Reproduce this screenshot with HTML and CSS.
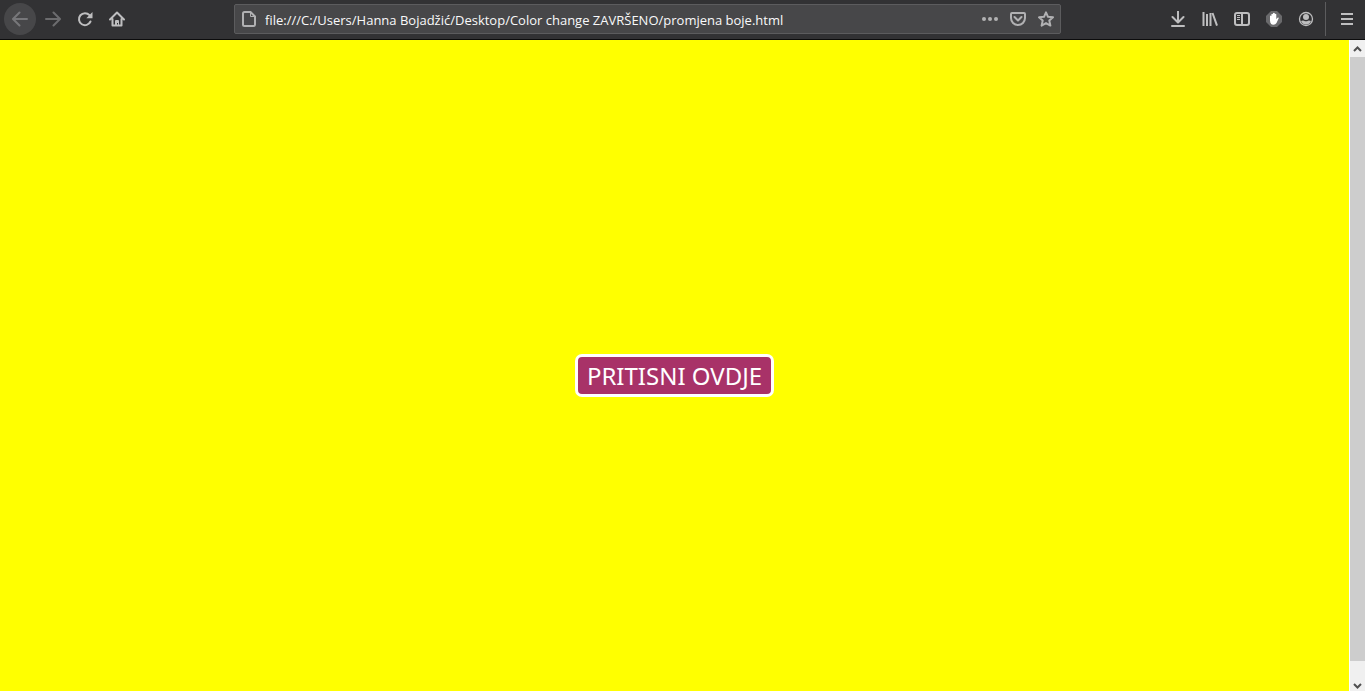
FILE: index.html
```html
<!DOCTYPE html>
<html lang="bs">
<head>
<meta charset="utf-8">
<title>promjena boje</title>
<link rel="stylesheet" href="styles.css">
</head>
<body>
<header class="toolbar">
  <nav class="group" aria-label="Navigation">
    <button class="tool tool-back" aria-label="Back"><svg class="icon" viewBox="0 0 16 16"><path d="M15 8H1.500M7.500 1.500L1 8l6.500 6.500"/></svg></button>
    <button class="tool tool-off" aria-label="Forward"><svg class="icon" viewBox="0 0 16 16"><path d="M1 8h13.500M8.500 1.500L15 8l-6.500 6.500"/></svg></button>
    <button class="tool" aria-label="Reload"><svg class="icon" viewBox="0 0 16 16"><path d="M13.500 10.500A6 6 0 1 1 12.500 4.200"/><path class="solid" d="M15.500 1v6.200H9.300z"/></svg></button>
    <button class="tool" aria-label="Home"><svg class="icon" viewBox="0 0 16 16"><path d="M1 8.500L8 1.500l7 7M3.500 8v6.500h9V8"/><path class="solid" d="M6 14.500V10q0-1 1-1h2q1 0 1 1v4.500H9V12H8v2.500z"/></svg></button>
  </nav>
  <div class="address">
    <svg class="icon" viewBox="0 0 16 16"><path d="M3.500 1H9.500L14 5.500v8q0 1.500-1.500 1.500h-9Q2 15 2 13.500v-11Q2 1 3.500 1z"/><path class="thin" d="M9.500 1v4.500H14"/></svg>
    <input class="address-text" type="text" aria-label="Address" value="file:///C:/Users/Hanna Bojadžić/Desktop/Color change ZAVRŠENO/promjena boje.html">
    <button class="action" aria-label="Page actions"><svg class="icon" viewBox="0 0 16 16"><g class="solid"><circle cx="2" cy="8" r="2"/><circle cx="8" cy="8" r="2"/><circle cx="14" cy="8" r="2"/></g></svg></button>
    <button class="action" aria-label="Save to Pocket"><svg class="icon" viewBox="0 0 16 16"><path d="M2 2h12q1 0 1 1v4a7 7 0 0 1-14 0V3q0-1 1-1z"/><path d="M4.500 6L8 9.500 11.500 6"/></svg></button>
    <button class="action" aria-label="Bookmark"><svg class="icon" viewBox="0 0 16 16"><path d="M8 1.300l2 4.500 5 .5-3.700 3.300 1.100 5L8 12.100l-4.400 2.500 1.100-5L1 6.300l5-.5z"/></svg></button>
  </div>
  <div class="group">
    <button class="tool" aria-label="Downloads"><svg class="icon" viewBox="0 0 16 16"><path d="M8 0v11M2.500 6L8 11.500 13.500 6M2 15h12"/></svg></button>
    <button class="tool" aria-label="Library"><svg class="icon" viewBox="0 0 16 16"><path class="flat" d="M1.500 1v14M5 3v12M8.500 2v13M10.500 2L15 14.700"/></svg></button>
    <button class="tool" aria-label="Sidebars"><svg class="icon" viewBox="0 0 16 16"><rect x="1" y="2" width="14" height="12" rx="2"/><path d="M8 2v12"/><path class="thin flat" d="M3 4.500h3M3 6.500h3M3 8.500h3"/></svg></button>
    <button class="tool" aria-label="Blocker"><svg class="icon" viewBox="0 0 16 16"><path class="badge" d="M5 0h6l5 5v6l-5 5H5l-5-5V5z"/><path class="hand" d="M4 8V5q.7-1 1.400 0V3.200q.8-1 1.600 0v-1q.9-1 1.800 0v1q.8-.8 1.500 0v5l1.200-1.500q1.500-.4 1.200.6L10.500 12q-1 1.800-3 1.800-3.500 0-3.500-4z"/></svg></button>
    <button class="tool" aria-label="Account"><svg class="icon" viewBox="0 0 16 16"><circle class="ring" cx="8" cy="8" r="6.500"/><circle class="solid" cx="8" cy="6" r="3"/><path class="solid" d="M3 10q2-.8 3-.2 2 1 4 0 1-.6 3 .2-1.500 3.500-5 3.500T3 10z"/></svg></button>
  </div>
  <button class="tool tool-menu" aria-label="Menu"><svg class="icon" viewBox="0 0 16 16"><path class="flat" d="M2 3h12M2 8h12M2 13h12"/></svg></button>
</header>
<div class="view">
  <main class="page"><button class="press">PRITISNI OVDJE</button></main>
  <div class="scroll" aria-hidden="true">
    <svg class="arrow" viewBox="0 0 15 17"><path d="M4 11l3.500-3.500L11 11"/></svg>
    <div class="thumb"></div>
    <div class="track"></div>
    <svg class="arrow" viewBox="0 0 15 17"><path d="M4 10l3.500 3.500L11 10"/></svg>
  </div>
</div>
</body>
</html>
```
FILE: styles.css
```css
* { box-sizing: border-box; }
body {
  margin: 0;
  min-height: 100vh;
  display: flex;
  flex-direction: column;
  font-family: "Open Sans", "Noto Sans", sans-serif;
}
button {
  margin: 0;
  border: 0;
  padding: 0;
  background: none;
  color: inherit;
}
.toolbar {
  display: flex;
  align-items: center;
  height: 40px;
  padding: 0 2px 2px 4px;
  background: #323234;
  border-bottom: 1px solid #0c0c0d;
  color: #bebebf;
}
.group { display: flex; flex: none; }
.tool {
  flex: none;
  display: flex;
  align-items: center;
  justify-content: center;
  width: 32px;
  height: 32px;
}
.tool-back {
  margin-right: 1px;
  border-radius: 50%;
  background: #474749;
  color: #77777a;
}
.tool-off { color: #6c6c6e; }
.icon {
  flex: none;
  width: 16px;
  height: 16px;
  fill: none;
  stroke: currentColor;
  stroke-width: 2;
  stroke-linecap: round;
  stroke-linejoin: round;
}
.icon .solid { fill: currentColor; stroke: none; }
.icon .thin { stroke-width: 1; }
.icon .ring { stroke-width: 1.3; }
.icon .flat { stroke-linecap: butt; }
.icon .badge { fill: #6a6a6c; stroke: none; }
.icon .hand { fill: #fff; stroke: none; }
.address {
  flex: 1;
  display: flex;
  align-items: center;
  gap: 12px;
  height: 30px;
  margin: 0 101px;
  padding: 0 6px;
  background: #474749;
  border: 1px solid #5c5c5e;
  border-radius: 2px;
  color: #b1b1b3;
}
.address-text {
  flex: 1;
  min-width: 0;
  height: 28px;
  margin-left: -4px;
  padding: 2px 0 0;
  border: 0;
  outline: 0;
  background: none;
  color: #f9f9fa;
  font: 13px "Open Sans", "Noto Sans", sans-serif;
}
.action { display: flex; }
.tool-menu {
  width: 38px;
  height: 34px;
  margin-left: 3px;
  padding-left: 4px;
  border-left: 1px solid #5c5c5e;
}
.view { flex: 1; display: flex; }
.page {
  flex: 1;
  display: flex;
  align-items: center;
  justify-content: center;
  padding-top: 20px;
  background: #ff0;
}
.press {
  padding: 2px 9px;
  border: 3px solid #fff;
  border-radius: 7px;
  background: #a83268;
  color: #fff;
  font: 24px/33px "Noto Sans", sans-serif;
}
.scroll {
  display: flex;
  flex-direction: column;
  width: 16px;
  border-left: 1px solid #fff;
  background: #f0f0f0;
}
.arrow {
  flex: none;
  width: 15px;
  height: 17px;
  fill: none;
  stroke: #505050;
  stroke-width: 2;
}
.thumb { flex: 604; background: #cdcdcd; }
.track { flex: 13; }
```
